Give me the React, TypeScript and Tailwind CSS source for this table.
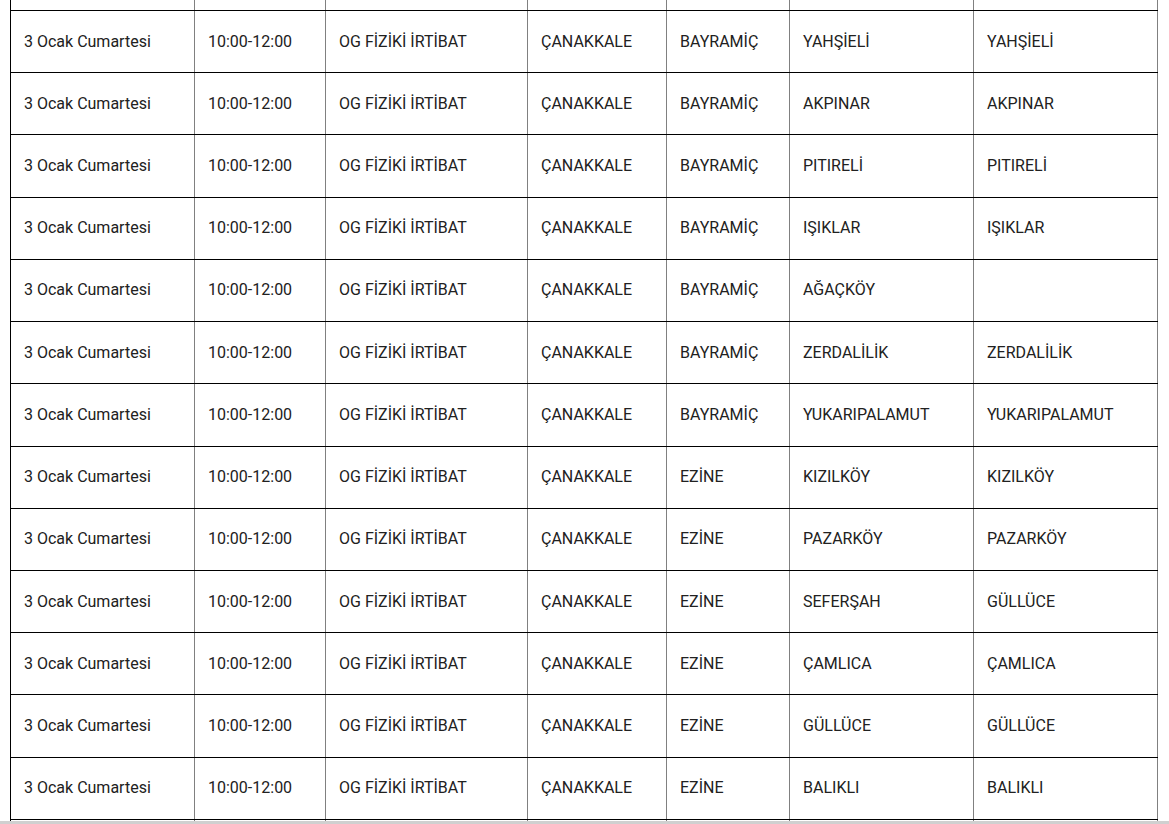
import React from "react";

const rows: [string, string, string][] = [
  ["BAYRAMİÇ", "YAHŞİELİ", "YAHŞİELİ"],
  ["BAYRAMİÇ", "AKPINAR", "AKPINAR"],
  ["BAYRAMİÇ", "PITIRELİ", "PITIRELİ"],
  ["BAYRAMİÇ", "IŞIKLAR", "IŞIKLAR"],
  ["BAYRAMİÇ", "AĞAÇKÖY", ""],
  ["BAYRAMİÇ", "ZERDALİLİK", "ZERDALİLİK"],
  ["BAYRAMİÇ", "YUKARIPALAMUT", "YUKARIPALAMUT"],
  ["EZİNE", "KIZILKÖY", "KIZILKÖY"],
  ["EZİNE", "PAZARKÖY", "PAZARKÖY"],
  ["EZİNE", "SEFERŞAH", "GÜLLÜCE"],
  ["EZİNE", "ÇAMLICA", "ÇAMLICA"],
  ["EZİNE", "GÜLLÜCE", "GÜLLÜCE"],
  ["EZİNE", "BALIKLI", "BALIKLI"],
];

const cols = "grid grid-cols-[184px_131px_202px_139px_123px_184px_185px]";

function EmptyRow({ h }: { h: string }) {
  return (
    <div className={`${cols} ${h} border-t border-black`}>
      <div className="border-l border-black" />
      <div className="border-l border-[#808080]" />
      <div className="border-l border-[#808080]" />
      <div className="border-l border-[#808080]" />
      <div className="border-l border-[#808080]" />
      <div className="border-l border-[#808080]" />
      <div className="border-l border-r border-[#808080]" />
    </div>
  );
}

export default function App() {
  return (
    <div
      className="h-[824px] bg-white overflow-hidden text-[16px] text-[#212121]"
      style={{ fontFamily: "Roboto, 'Liberation Sans', sans-serif" }}
    >
      <div className="ml-[10px] w-[1148px] mt-[-52.23px]">
        <EmptyRow h="h-[62.23px]" />
        {rows.map((r, i) => (
          <div
            key={i}
            className={`${cols} h-[62.23px] border-t border-black`}
          >
            <div className="flex items-center pl-[13px] border-l border-black whitespace-nowrap">
              3 Ocak Cumartesi
            </div>
            <div className="flex items-center pl-[13px] border-l border-[#808080] whitespace-nowrap">
              10:00-12:00
            </div>
            <div className="flex items-center pl-[13px] border-l border-[#808080] whitespace-nowrap">
              OG FİZİKİ İRTİBAT
            </div>
            <div className="flex items-center pl-[13px] border-l border-[#808080] whitespace-nowrap">
              ÇANAKKALE
            </div>
            <div className="flex items-center pl-[13px] border-l border-[#808080] whitespace-nowrap">
              {r[0]}
            </div>
            <div className="flex items-center pl-[13px] border-l border-[#808080] whitespace-nowrap">
              {r[1]}
            </div>
            <div className="flex items-center pl-[13px] border-l border-r border-[#808080] whitespace-nowrap">
              {r[2]}
            </div>
          </div>
        ))}
        <EmptyRow h="h-[8px]" />
      </div>
      <div className="fixed left-0 right-0 bottom-0 h-[3px] bg-[#d0d0d0]" />
    </div>
  );
}
